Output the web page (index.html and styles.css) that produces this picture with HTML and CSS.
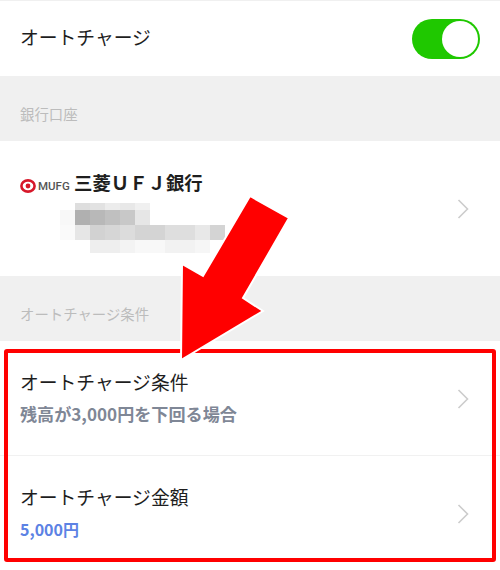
FILE: index.html
```html
<!DOCTYPE html>
<html lang="ja">
<head>
<meta charset="utf-8">
<title>オートチャージ</title>
<link rel="stylesheet" href="styles.css">
</head>
<body>
<main class="page">
  <div class="row toggle-row">
    <span class="title">オートチャージ</span>
    <span class="switch"><span class="knob"></span></span>
  </div>
  <div class="section">銀行口座</div>
  <div class="row bank-row">
    <div class="bank">
      <div class="bank-head">
        <span class="logo">
          <svg class="logo-mark" width="16" height="14" viewBox="0 0 16 14"><ellipse cx="8" cy="7" rx="6.6" ry="5.6" fill="none" stroke="#d7182a" stroke-width="2.6"/><circle cx="8" cy="7" r="2.4" fill="#d7182a"/></svg>
          <span class="logo-text">MUFG</span>
        </span>
        <span class="bank-name">三菱ＵＦＪ銀行</span>
      </div>
      <svg class="mosaic" width="180" height="52" viewBox="0 0 180 52">
        <g>
          <rect x="15" y="0" width="15" height="7" fill="#dedede"/><rect x="30" y="0" width="15" height="7" fill="#e2e2e2"/><rect x="45" y="0" width="15" height="7" fill="#ececec"/><rect x="60" y="0" width="15" height="7" fill="#e8e8e8"/><rect x="75" y="0" width="15" height="7" fill="#f0f0f0"/>
          <rect x="0" y="7" width="15" height="15" fill="#f8f8f8"/><rect x="15" y="7" width="15" height="15" fill="#b0b0b0"/><rect x="30" y="7" width="15" height="15" fill="#b8b8b8"/><rect x="45" y="7" width="15" height="15" fill="#c0c0c0"/><rect x="60" y="7" width="15" height="15" fill="#c8c8c8"/><rect x="75" y="7" width="15" height="15" fill="#e6e6e6"/>
          <rect x="0" y="22" width="15" height="15" fill="#fafafa"/><rect x="15" y="22" width="15" height="15" fill="#e6e6e6"/><rect x="30" y="22" width="15" height="15" fill="#d2d2d2"/><rect x="45" y="22" width="15" height="15" fill="#d6d6d6"/><rect x="60" y="22" width="15" height="15" fill="#dcdcdc"/><rect x="75" y="22" width="15" height="15" fill="#d4d4d4"/><rect x="90" y="22" width="15" height="15" fill="#d4d4d4"/><rect x="105" y="22" width="15" height="15" fill="#dedede"/><rect x="120" y="22" width="15" height="15" fill="#dedede"/><rect x="135" y="22" width="15" height="15" fill="#e8e8e8"/><rect x="150" y="22" width="15" height="15" fill="#d4d4d4"/>
          <rect x="30" y="37" width="15" height="13" fill="#eeeeee"/><rect x="45" y="37" width="15" height="13" fill="#eeeeee"/><rect x="60" y="37" width="15" height="13" fill="#f3f3f3"/><rect x="75" y="37" width="15" height="13" fill="#f8f8f8"/><rect x="90" y="37" width="15" height="13" fill="#f8f8f8"/><rect x="105" y="37" width="15" height="13" fill="#f2f2f2"/><rect x="120" y="37" width="15" height="13" fill="#f2f2f2"/><rect x="135" y="37" width="15" height="13" fill="#f6f6f6"/>
        </g>
      </svg>
    </div>
    <svg class="chevron" width="12" height="20" viewBox="0 0 12 20"><path d="M1.5 1 L10.5 10 L1.5 19" fill="none" stroke="#cccccc" stroke-width="1.6"/></svg>
  </div>
  <div class="section">オートチャージ条件</div>
  <div class="row setting-row divided">
    <div>
      <div class="title">オートチャージ条件</div>
      <div class="sub sub-gray">残高が3,000円を下回る場合</div>
    </div>
    <svg class="chevron" width="12" height="20" viewBox="0 0 12 20"><path d="M1.5 1 L10.5 10 L1.5 19" fill="none" stroke="#cccccc" stroke-width="1.6"/></svg>
  </div>
  <div class="row setting-row">
    <div>
      <div class="title">オートチャージ金額</div>
      <div class="sub sub-blue">5,000円</div>
    </div>
    <svg class="chevron" width="12" height="20" viewBox="0 0 12 20"><path d="M1.5 1 L10.5 10 L1.5 19" fill="none" stroke="#cccccc" stroke-width="1.6"/></svg>
  </div>
  <div class="highlight"></div>
  <svg class="arrow" width="500" height="570" viewBox="0 0 500 570"><polygon points="250,196 289,218 243,298 263,311 181,360 182,264 203,276" fill="#ff0000" stroke="#ffffff" stroke-width="2"/></svg>
</main>
</body>
</html>
```
FILE: styles.css
```css
html, body {
  margin: 0;
  padding: 0;
}
body {
  background: #f0f0f0;
  font-family: "Noto Sans CJK JP", "Noto Sans", sans-serif;
  color: #1e1e1e;
}
.page {
  position: relative;
  width: 500px;
  height: 570px;
  overflow: hidden;
  padding-top: 1px;
  box-sizing: border-box;
}
.row {
  display: flex;
  align-items: center;
  justify-content: space-between;
  background: #ffffff;
  padding: 0 20px;
  box-sizing: border-box;
}
.toggle-row {
  height: 75px;
  padding-bottom: 3px;
}
.title {
  font-size: 18.8px;
  line-height: 26px;
}
.switch {
  display: flex;
  justify-content: flex-end;
  align-items: center;
  width: 68px;
  height: 40px;
  padding: 2px;
  box-sizing: border-box;
  border-radius: 20px;
  background: #1fc800;
  position: relative;
  top: 1.5px;
}
.knob {
  width: 36px;
  height: 36px;
  border-radius: 50%;
  background: #ffffff;
}
.section {
  height: 65px;
  padding: 27px 20px 0;
  box-sizing: border-box;
  font-size: 14.4px;
  line-height: 21px;
  color: #bcbcbc;
}
.bank-row {
  height: 135px;
  align-items: flex-start;
  padding-top: 28px;
}
.bank-head {
  display: flex;
  align-items: center;
  height: 26px;
}
.logo {
  display: flex;
  align-items: center;
  gap: 2px;
  width: 54px;
  padding-top: 7px;
}
.logo-text {
  font-family: "Roboto", sans-serif;
  font-size: 11.5px;
  font-weight: 500;
  color: #555555;
}
.bank-name {
  font-size: 18.4px;
  font-weight: 700;
}
.mosaic {
  display: block;
  margin: 8px 0 0 40px;
}
.bank-row .chevron {
  margin-top: 30px;
}
.chevron {
  margin-right: 11px;
  flex: none;
}
.setting-row {
  height: 115px;
  padding-top: 1px;
  padding-bottom: 0;
  align-items: center;
}
.setting-row > div {
  align-self: flex-start;
  padding-top: 27px;
}
.divided {
  border-bottom: 1px solid #f1f1f1;
}
.sub {
  margin-top: 7px;
  line-height: 24px;
  font-weight: 700;
}
.sub-gray {
  font-size: 17.1px;
  color: #7f8796;
}
.sub-blue {
  font-size: 16px;
  color: #5c82e4;
}
.highlight {
  position: absolute;
  left: 4px;
  top: 349px;
  width: 492px;
  height: 213px;
  box-sizing: border-box;
  border: 4.5px solid #ff0000;
  border-radius: 3px;
}
.arrow {
  position: absolute;
  left: 0;
  top: 0;
}
```
